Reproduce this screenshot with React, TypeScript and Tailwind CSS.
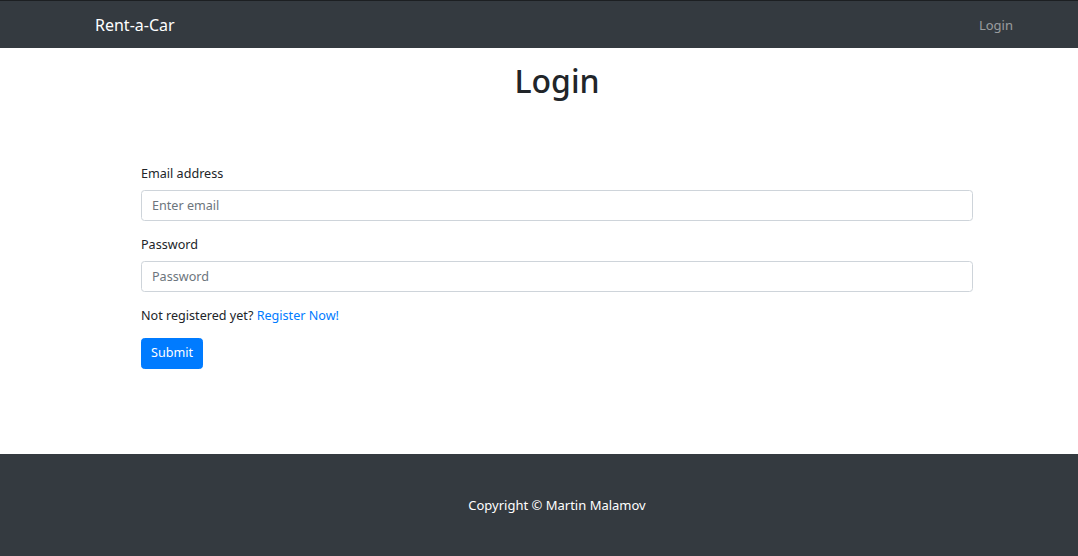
import React from "react";

export default function App() {
  return (
    <div className="min-h-[556px] flex flex-col font-['Noto_Sans',sans-serif] text-[#212529]">
      <nav className="h-[48px] bg-[#343a40] border-t border-[#1c1f22] flex items-center justify-between pl-[95px] pr-[65px]">
        <span className="text-[16px] text-white leading-none">Rent-a-Car</span>
        <span className="text-[13px] text-white/50 leading-none mt-[1px]">Login</span>
      </nav>
      <main className="flex-1 bg-white">
        <div className="ml-[141px] w-[832px]">
          <h1 className="mt-[12px] text-center text-[32px] font-medium leading-[42px] text-[#212529]">Login</h1>
          <form className="mt-[61px]" onSubmit={(e) => e.preventDefault()}>
            <div className="mb-[13px]">
              <label className="block text-[12.6px] leading-[21px] mb-[6px]">Email address</label>
              <input
                type="email"
                placeholder="Enter email"
                className="block w-full h-[31px] px-[10px] text-[12.6px] border border-[#ced4da] rounded-[3.5px] placeholder:text-[#6c757d] outline-none"
              />
            </div>
            <div className="mb-[13px]">
              <label className="block text-[12.6px] leading-[21px] mb-[6px]">Password</label>
              <input
                type="password"
                placeholder="Password"
                className="block w-full h-[31px] px-[10px] text-[12.6px] border border-[#ced4da] rounded-[3.5px] placeholder:text-[#6c757d] outline-none"
              />
            </div>
            <p className="text-[12.6px] leading-[21px] mb-[12px]">
              Not registered yet? <a href="#" className="text-[#007bff]">Register Now!</a>
            </p>
            <button
              type="submit"
              className="h-[31px] px-[9px] bg-[#007bff] text-white text-[12.6px] rounded-[3.5px] border border-[#007bff]"
            >
              Submit
            </button>
          </form>
        </div>
      </main>
      <footer className="h-[102px] bg-[#343a40] flex items-center pb-[3px]">
        <div className="ml-[141px] w-[832px] text-center">
          <span className="text-white text-[13px]">Copyright © Martin Malamov</span>
        </div>
      </footer>
    </div>
  );
}
